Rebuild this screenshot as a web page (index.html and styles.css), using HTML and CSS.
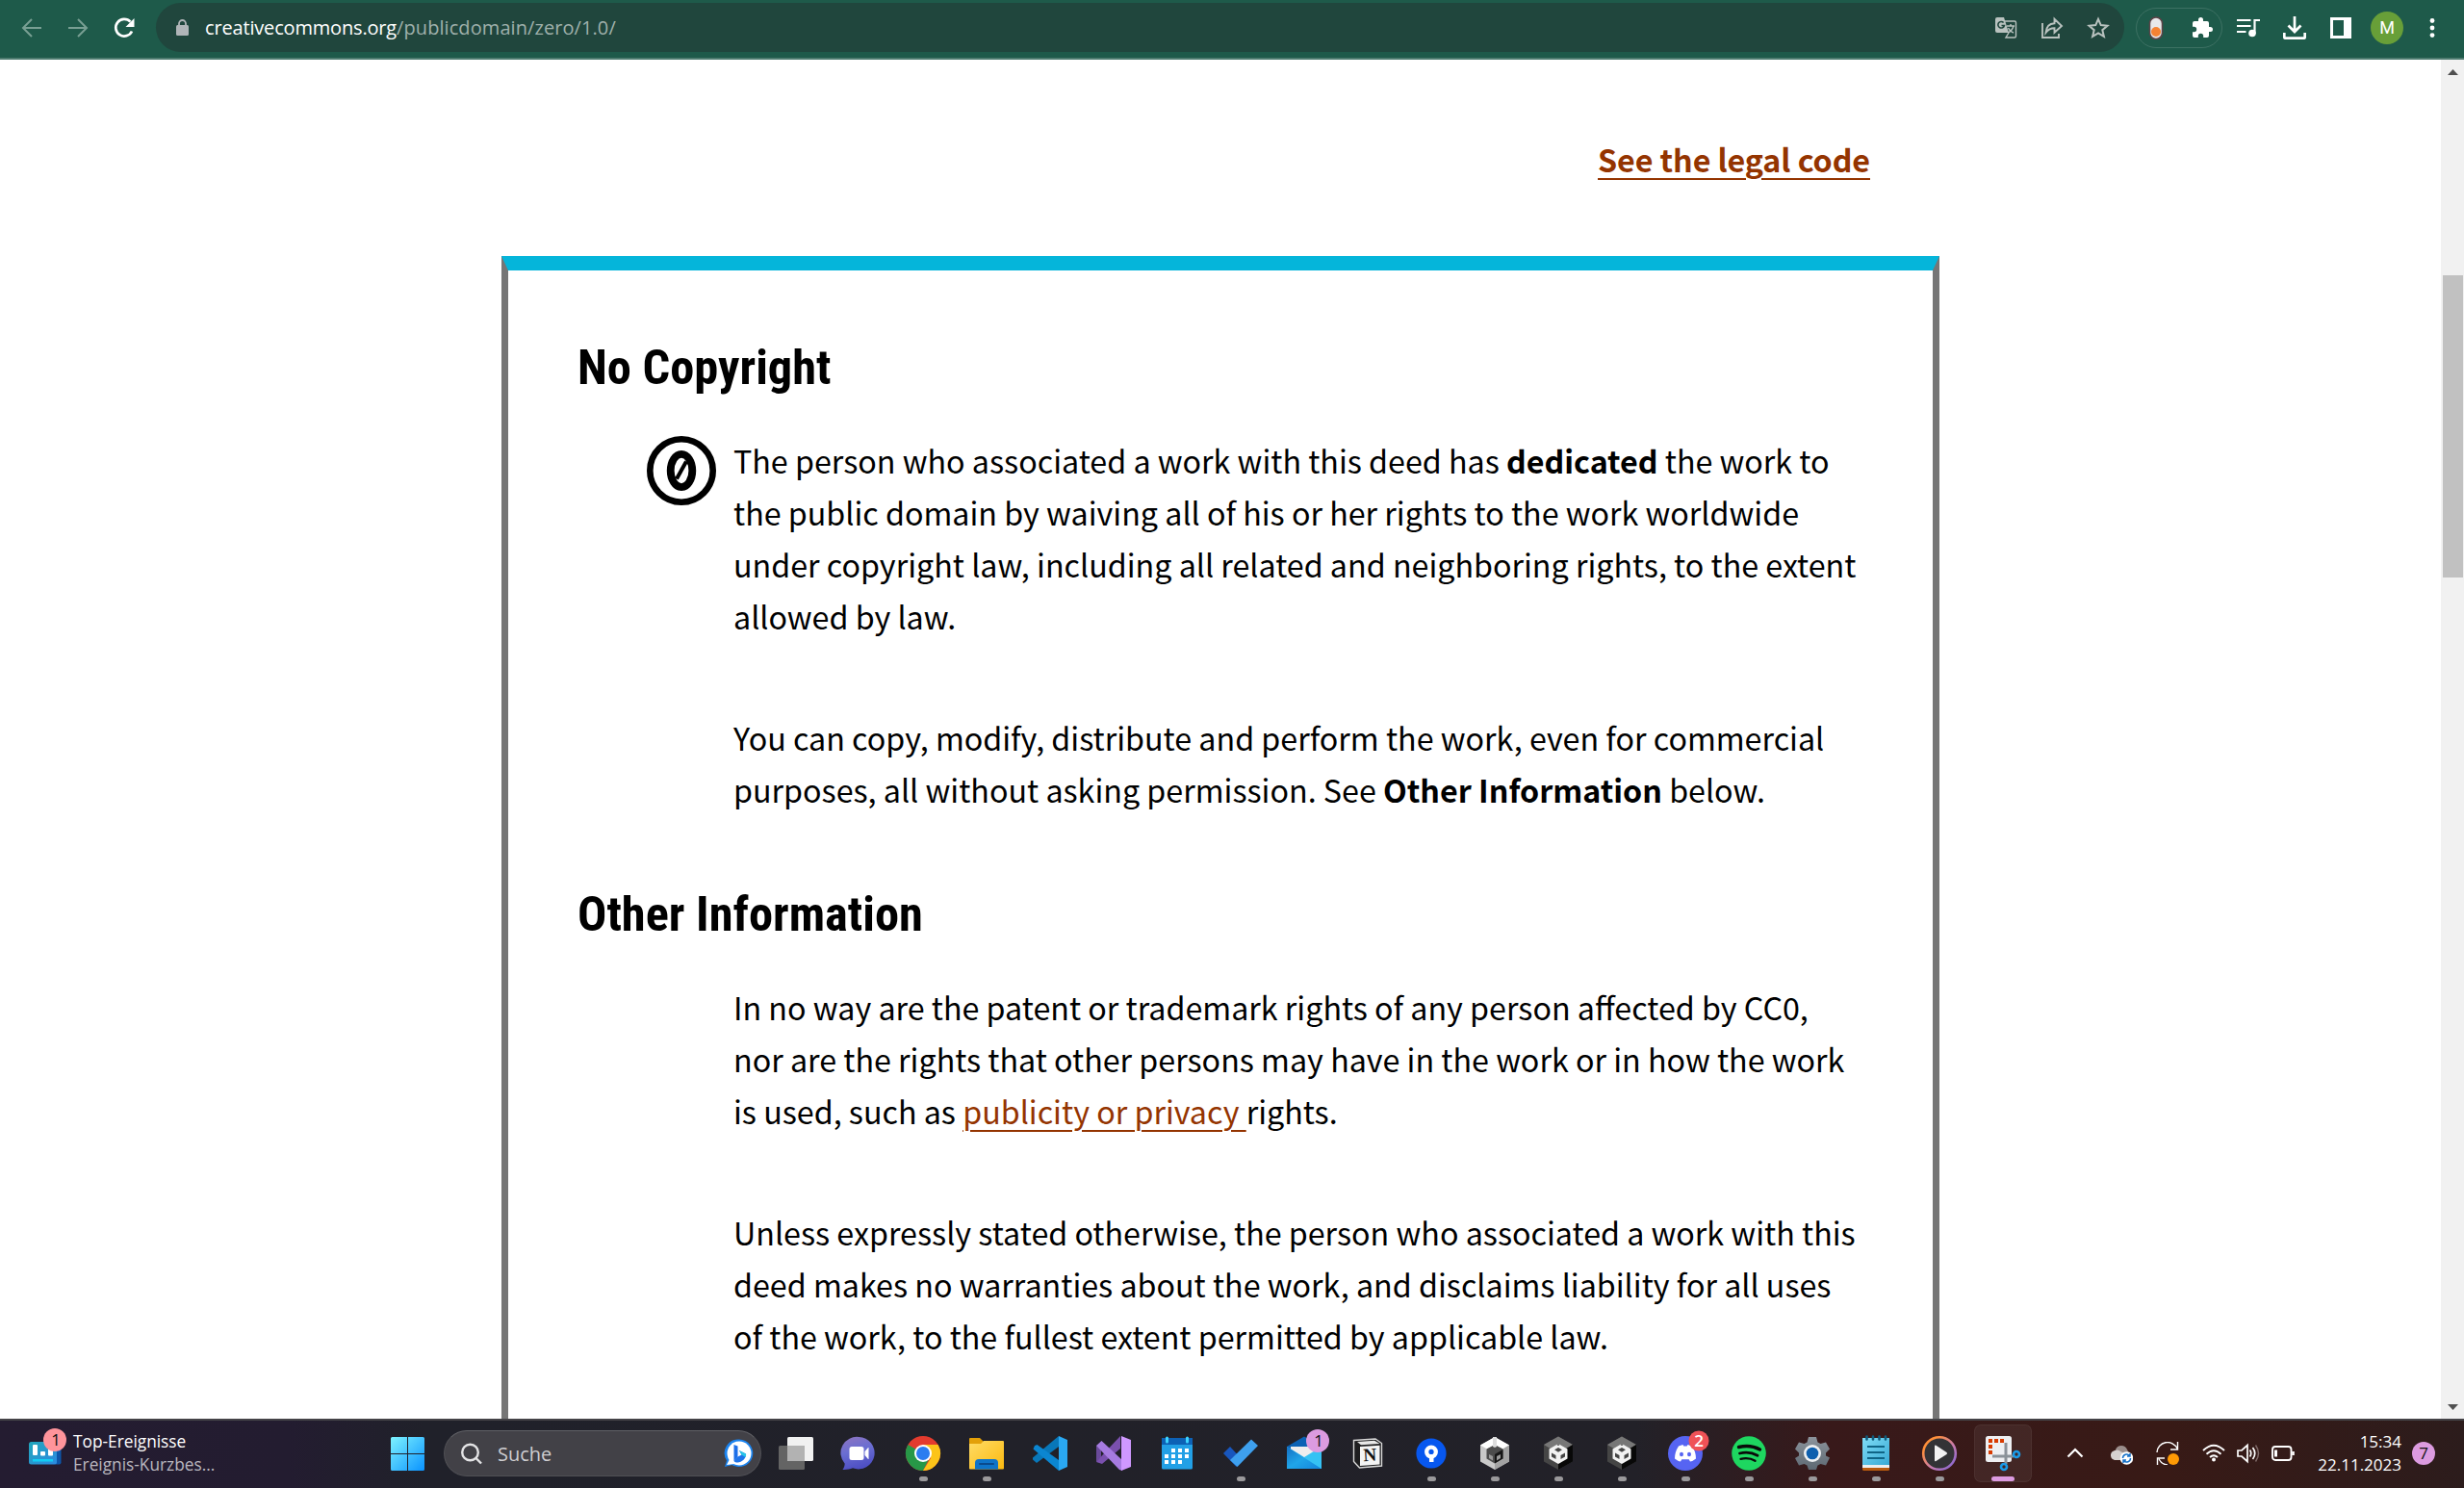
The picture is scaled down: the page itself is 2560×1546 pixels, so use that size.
FILE: index.html
```html
<!DOCTYPE html>
<html lang="en">
<head>
<meta charset="utf-8">
<title>CC0 1.0 Deed</title>
<link rel="stylesheet" href="styles.css">
</head>
<body>
<header class="toolbar">
  <nav class="nav-buttons">
    <svg class="icon dim" viewBox="0 0 24 24"><path d="M22 12H3M12 3l-9 9 9 9"/></svg>
    <svg class="icon dim" viewBox="0 0 24 24"><path d="M2 12h19M12 3l9 9-9 9"/></svg>
    <svg class="icon reload" viewBox="0 0 24 24"><path d="M20 15.500A8.800 8.800 0 1 1 18.500 5.700"/><path class="solid" d="M22.500 2v9h-9z"/></svg>
  </nav>
  <div class="omnibox">
    <svg class="lock" viewBox="0 0 13 17"><rect x="0" y="6" width="13" height="11" rx="1.500"/><path d="M3 7V4.500a3.500 3.500 0 0 1 7 0V7" fill="none" stroke="#b0b5b8" stroke-width="1.800"/></svg>
    <span class="url"><span class="host">creativecommons.org</span><span class="path">/publicdomain/zero/1.0/</span></span>
    <div class="omni-actions">
      <svg class="icon soft" viewBox="0 0 24 24"><path class="solid" d="M3 1h7l5 16H3a2 2 0 0 1-2-2V3a2 2 0 0 1 2-2z"/><path d="M11 5h10a1.500 1.500 0 0 1 1.500 1.500v14A1.500 1.500 0 0 1 21 22h-9l3-5" stroke-width="1.400"/><path d="M13 10h8M17 8v2M20 10q-1.500 5-6 7M14.500 12q2 4 5.500 5" stroke-width="1.400"/><path d="M9.600 6.500a3.300 3.300 0 1 0 .8 3H7.500" stroke="#20463d" stroke-width="1.600"/></svg>
      <svg class="icon soft" viewBox="0 0 24 24"><path d="M2 7v15h17v-4M5.500 17c.5-6 4-9.500 9-9.700V2.800L22 10l-7.500 6.800v-4.500c-4 0-6.500 1.200-9 4.700z" stroke-width="1.900"/></svg>
      <svg class="icon soft" viewBox="0 0 24 24"><path d="M12 2.800l2.700 6.300 6.800.6-5.200 4.500 1.600 6.700-5.900-3.600-5.900 3.600 1.600-6.700-5.200-4.500 6.800-.6z"/></svg>
    </div>
  </div>
  <div class="extensions">
    <svg class="icon" viewBox="0 0 24 24"><rect x="5.500" y="1" width="13" height="22.500" rx="6.500" fill="#e8e8ea" stroke="#5b4347" stroke-width="1.500"/><circle class="orange" cx="12" cy="16" r="5"/></svg>
    <svg class="icon" viewBox="0 0 24 24"><path class="solid" d="M20.500 11H19V7a2 2 0 0 0-2-2h-4V3.500a2.500 2.500 0 0 0-5 0V5H4a2 2 0 0 0-2 2v3.800h1.500a2.700 2.700 0 0 1 0 5.400H2V20a2 2 0 0 0 2 2h3.800v-1.500a2.700 2.700 0 0 1 5.400 0V22H17a2 2 0 0 0 2-2v-4h1.500a2.500 2.500 0 0 0 0-5z"/></svg>
  </div>
  <div class="browser-actions">
    <svg class="icon" viewBox="0 0 24 24"><path d="M0 4h14.500M0 10h14.500M0 16h9.500M18.500 18V4H24" stroke-width="2.200"/><circle class="solid" cx="16" cy="17.500" r="3.800"/></svg>
    <svg class="icon" viewBox="0 0 24 24"><path d="M12 0v15M5.500 9.500L12 16l6.500-6.500M1.300 17v4.500a1.200 1.200 0 0 0 1.200 1.200h19a1.200 1.200 0 0 0 1.200-1.200V17" stroke-width="2.700"/></svg>
    <svg class="icon" viewBox="0 0 24 24"><path class="solid" fill-rule="evenodd" d="M1 1h22v22H1zM4 4v16h11V4z"/></svg>
  </div>
  <div class="avatar">M</div>
  <svg class="icon" viewBox="0 0 24 24"><g class="solid"><circle cx="12" cy="4.500" r="2.400"/><circle cx="12" cy="12" r="2.400"/><circle cx="12" cy="19.600" r="2.400"/></g></svg>
</header>

<main class="viewport">
  <div class="page">
    <div class="legal"><a class="legal-link">See the legal code</a></div>
    <article class="deed">
      <h2 class="deed-title">No Copyright</h2>
      <section class="deed-section">
        <svg class="zero" viewBox="0 0 72 72"><circle cx="36" cy="36" r="32.700" stroke-width="6.600"/><ellipse cx="36" cy="36" rx="11.300" ry="17.200" stroke-width="7.800"/><path d="M31 44.500l10-18" stroke-width="4"/></svg>
        <p>The person who associated a work with this deed has <b>dedicated</b> the work to<br>the public domain by waiving all of his or her rights to the work worldwide<br>under copyright law, including all related and neighboring rights, to the extent<br>allowed by law.</p>
        <p>You can copy, modify, distribute and perform the work, even for commercial<br>purposes, all without asking permission. See <b>Other Information</b> below.</p>
      </section>
      <h2 class="deed-title">Other Information</h2>
      <section class="deed-section">
        <p>In no way are the patent or trademark rights of any person affected by CC0,<br>nor are the rights that other persons may have in the work or in how the work<br>is used, such as <a class="inline-link">publicity or privacy </a>rights.</p>
        <p>Unless expressly stated otherwise, the person who associated a work with this<br>deed makes no warranties about the work, and disclaims liability for all uses<br>of the work, to the fullest extent permitted by applicable law.</p>
      </section>
    </article>
  </div>
  <div class="scrollbar">
    <svg class="arrow" viewBox="0 0 24 24"><path d="M7 16l5.500-6 5.500 6z"/></svg>
    <div class="thumb"></div>
    <svg class="arrow" viewBox="0 0 24 24"><path d="M7 9l5.500 6L18 9z"/></svg>
  </div>
</main>

<footer class="taskbar">
  <svg width="0" height="0" class="defs">
    <defs>
      <linearGradient id="win" x1="0" y1="0" x2="1" y2="1"><stop offset="0" stop-color="#7ef3ff"/><stop offset="1" stop-color="#0a93ff"/></linearGradient>
      <linearGradient id="chat" x1="0" y1="0" x2="0.300" y2="1"><stop offset="0" stop-color="#8f74c0"/><stop offset="0.500" stop-color="#6a6ed2"/><stop offset="1" stop-color="#4f50c4"/></linearGradient>
      <linearGradient id="folder" x1="0" y1="0" x2="1" y2="1"><stop offset="0" stop-color="#ffdc66"/><stop offset="1" stop-color="#fbb90f"/></linearGradient>
      <linearGradient id="ring" x1="0" y1="0" x2="1" y2="1"><stop offset="0.200" stop-color="#ff8f3a"/><stop offset="0.600" stop-color="#c77bb0"/><stop offset="1" stop-color="#7a63d8"/></linearGradient>
      <linearGradient id="mail" x1="0" y1="0" x2="1" y2="1"><stop offset="0" stop-color="#1470c4"/><stop offset="0.500" stop-color="#20a5e8"/><stop offset="1" stop-color="#1484dc"/></linearGradient>
      <linearGradient id="pad" x1="0" y1="0" x2="1" y2="1"><stop offset="0" stop-color="#7fdcf6"/><stop offset="1" stop-color="#38a9d4"/></linearGradient>
      <linearGradient id="gear" x1="0" y1="0" x2="0" y2="1"><stop offset="0" stop-color="#8c949c"/><stop offset="1" stop-color="#5d6872"/></linearGradient>
      <linearGradient id="news" x1="0" y1="0" x2="1" y2="1"><stop offset="0" stop-color="#22a6bb"/><stop offset="1" stop-color="#2b8ae0"/></linearGradient>
    </defs>
  </svg>
  <div class="widgets">
    <svg class="news" viewBox="0 0 40 40"><rect x="26" y="15" width="7.500" height="23.500" rx="2" fill="#0d55a8"/><rect x="0" y="15" width="29" height="23.500" rx="2.500" fill="url(#news)"/><g fill="#fff"><rect x="4" y="18" width="5" height="11" rx="1"/><rect x="12" y="25" width="5" height="4.500" rx="1"/><rect x="20" y="20" width="5" height="9.500" rx="1"/></g><rect x="4" y="33" width="21" height="2.500" fill="#12cdf4"/><circle cx="27" cy="13" r="12" fill="#ff949b"/><text x="28" y="19" class="badge-text dark">1</text></svg>
    <div class="headline"><span class="head-top">Top-Ereignisse</span><span class="head-sub">Ereignis-Kurzbes...</span></div>
  </div>
  <svg class="start" viewBox="0 0 35 35"><path fill="url(#win)" d="M1.500 0H17v17H0V1.500A1.500 1.500 0 0 1 1.500 0zM18 0h15.500A1.500 1.500 0 0 1 35 1.500V17H18zM0 18h17v17H1.500A1.500 1.500 0 0 1 0 33.500zM18 18h17v15.500a1.500 1.500 0 0 1-1.500 1.500H18z"/></svg>
  <div class="search">
    <svg class="lens" viewBox="0 0 22 23"><circle cx="9.500" cy="10" r="8.300"/><path d="M15.500 16l5.500 5.500"/></svg>
    <span class="search-text">Suche</span>
    <svg class="bing" viewBox="0 0 32 32"><path d="M17 1.500a14.300 14.300 0 1 1-7.500 26.500L2 30l2-6.500A14.300 14.300 0 0 1 17 1.500z" fill="#1b83ee"/><circle cx="17" cy="16" r="12.500" fill="#fff"/><path d="M4 28l3-6 5 5z" fill="#fff"/><path d="M11.500 7l4 1.500V20l-4 4z" fill="#1d6fe8"/><path d="M11.500 24l4-4.500 4-2-2.500-4.500 7 3.500c.8 4.500-4.500 9-8.500 9-1.800 0-3.200-.5-4-1.500z" fill="#1f74ea"/><path d="M17 13l7 3.500c.3 1.500 0 2.500-.5 3.500l-4-2.500z" fill="#29c5e6"/></svg>
  </div>
  <div class="apps">
    <svg class="app" viewBox="0 0 66 72"><rect x="15" y="28" width="27" height="25" rx="1.500" fill="#646464"/><rect x="24" y="19" width="27" height="25" rx="1.500" fill="#f1f1f1"/><path d="M24 28h18v16H25.500a1.500 1.500 0 0 1-1.500-1.500z" fill="#b2b2b2"/></svg>
    <svg class="app" viewBox="0 0 66 72"><path d="M32.500 19a16.700 16.700 0 1 1-6.500 32.300c-3 1.200-6.500 1.900-10.500 1.700 1.500-2.500 2-4 2.200-6.300A16.700 16.700 0 0 1 32.500 19z" fill="url(#chat)"/><rect x="22.500" y="29" width="15" height="14" rx="2.500" fill="#fff"/><path d="M38.500 34l3.500-4h.5v12H42l-3.500-4z" fill="#fff"/></svg>
    <svg class="app" viewBox="0 0 66 72"><circle cx="33" cy="36" r="18" fill="#e33b2e"/><path d="M33 36L17.400 27A18 18 0 0 0 33 54l7-14z" fill="#279847"/><path d="M33 27h15.600A18 18 0 0 1 33 54l8-13z" fill="#fcc419"/><circle cx="33" cy="36" r="9" fill="#fff"/><circle cx="33" cy="36" r="7" fill="#2b7cf0"/><rect class="dot" x="29" y="60" width="9" height="5" rx="2.500"/></svg>
    <svg class="app" viewBox="0 0 66 72"><path d="M15 21q0-1 1-1h10l4 4h1v6H15z" fill="#e3a008"/><path d="M15 26h12l3-3h20q1 0 1 1v27.500q0 1-1 1H16q-1 0-1-1z" fill="url(#folder)"/><path d="M21 52.500V46q0-4 4-4h16q4 0 4 4v6.500z" fill="#0e74c8"/><path d="M26 47h14" stroke="#0a4a8c" stroke-width="2" stroke-linecap="round"/><rect class="dot" x="29" y="60" width="9" height="5" rx="2.500"/></svg>
    <svg class="app" viewBox="0 0 66 72"><path d="M42 18v11L19 46l-4-3.500v-2z" fill="#0877b9"/><path d="M15.500 31.500l1.500-3.500 2.500-1L42 43v11z" fill="#0b86d1"/><path d="M42 18l9 4v28l-9 4V18z" fill="#2aa8f2"/></svg>
    <svg class="app" viewBox="0 0 66 72"><path d="M15 28l5 4v9l-5 4z" fill="#6a4a9a"/><path d="M40 18v13L21 47l-6-2 8-9z" fill="#7a50ae"/><path d="M15 28l5.500-5L42 43v11L39 53z" fill="#a67be0"/><path d="M41 18l10 4v28l-10 4z" fill="#cf98ff"/></svg>
    <svg class="app" viewBox="0 0 66 72"><path d="M17 27h32v24q0 1.500-1.500 1.500h-29Q17 52.500 17 51z" fill="#22a0e6"/><path d="M17 20h32v7H17z" fill="#0d61b5"/><path d="M22.500 20v4M43.500 20v4" stroke="#3dd5ff" stroke-width="3" stroke-linecap="round"/><g fill="#fff"><path d="M27 31h4v4h-4zM34 31h4v4h-4zM41 31h4v4h-4zM20 37h4v4h-4zM27 37h4v4h-4zM34 37h4v4h-4zM41 37h4v4h-4zM20 43h4v4h-4zM27 43h4v4h-4zM34 43h4v4h-4z"/></g></svg>
    <svg class="app" viewBox="0 0 66 72"><path d="M15 36l7-7 11 12-4.500 9z" fill="#1856bd"/><path d="M22 43L44 21.500l7 6.500-21.500 22z" fill="#3ea0ee"/><rect class="dot" x="29" y="60" width="9" height="5" rx="2.500"/></svg>
    <svg class="app" viewBox="0 0 66 72"><path d="M15 29l18-10.500L51 29v8H15z" fill="#0b62b4"/><path d="M19 29h29v15H19z" fill="#eee"/><path d="M15 29l18 11 18-11v23H15z" fill="#35c2f4"/><path d="M15 29l36 23H15z" fill="url(#mail)"/><circle cx="47" cy="23" r="12" fill="#dc9be0"/><text x="48" y="29" class="badge-text dark">1</text></svg>
    <svg class="app" viewBox="0 0 66 72"><path d="M18.500 22.500L41 21l6.500 4.500V49L24.500 51l-6-6.500z" fill="#1e1e20" stroke="#d8d8d8" stroke-width="1.400"/><path d="M22 24l18-1.200 5.500 3.300L26 27.300z" fill="#e8e8e8"/><path d="M25 29l20.500-1.300V47.500L25 49z" fill="#f4f4f4"/><text x="35.300" y="44" transform="rotate(-3 35 38)" class="notion-n">N</text></svg>
    <svg class="app" viewBox="0 0 66 72"><circle cx="33" cy="36" r="15.600" fill="#0757ef"/><circle cx="33" cy="34.500" r="4.800" fill="none" stroke="#fff" stroke-width="4.300"/><path d="M31 37h4.500v8H31z" fill="#fff"/><rect class="dot" x="29" y="60" width="9" height="5" rx="2.500"/></svg>
    <svg class="app" viewBox="0 0 66 72"><path d="M33 19l15 8.500v17L33 53l-15-8.500v-17z" fill="#c9c9c9"/><path d="M33 19l15 8.500-7 4-8-4.500-8 4.500-7-4z" fill="#fff"/><path d="M48 27.500v17L33 53v-6l8.500-5V31.500z" fill="#a3a3a3"/><path d="M33 27l8.500 4.500v10L33 46.500l-8.500-5v-10z" fill="#4c4c4c"/><path d="M33 37l8.500-5v9.500L33 46.500z" fill="#151515"/><path d="M31 19h4v10l-2 1-2-1z" fill="#ddd"/><path d="M27 37l4 2v4.500L27 41zM39 37l-4 2v4.500l4-2.500z" fill="#999"/><rect class="dot" x="29" y="60" width="9" height="5" rx="2.500"/></svg>
    <svg class="app" viewBox="0 0 66 72"><path d="M33 18.500l15 8.500v17.500L33 53l-15-8.500V27z" fill="#454545"/><path d="M33 18.500L48 27l-15 9-15-9z" fill="#777"/><path d="M48 27v17.500L33 53V36z" fill="#080808"/><path d="M33 26l9.500 5.500v10L33 47l-9.500-5.500v-10z" fill="#f2f2f2"/><path d="M33 30l4 2.300-4 2.400-4-2.400zM26 35.500l4.500 2.500v4L26 39.500zM40 35.500L35.500 38v4l4.500-2.500z" fill="#444"/><path d="M31.800 23h2.400v5h-2.400z" fill="#777"/><rect class="dot" x="29" y="60" width="9" height="5" rx="2.500"/></svg>
    <svg class="app" viewBox="0 0 66 72"><path d="M33 18.500l15 8.500v17.500L33 53l-15-8.500V27z" fill="#454545"/><path d="M33 18.500L48 27l-15 9-15-9z" fill="#777"/><path d="M48 27v17.500L33 53V36z" fill="#080808"/><path d="M33 26l9.500 5.500v10L33 47l-9.500-5.500v-10z" fill="#f2f2f2"/><path d="M33 30l4 2.300-4 2.400-4-2.400zM26 35.500l4.500 2.500v4L26 39.500zM40 35.500L35.500 38v4l4.500-2.500z" fill="#444"/><path d="M31.800 23h2.400v5h-2.400z" fill="#777"/><rect class="dot" x="29" y="60" width="9" height="5" rx="2.500"/></svg>
    <svg class="app" viewBox="0 0 66 72"><circle cx="33" cy="36" r="18" fill="#5664f2"/><path d="M26 28.500q2-1 4.500-1.500l.8 1.500h3.400l.8-1.500q2.500.5 4.500 1.500 4 6 4 13-3 2.500-6 3l-1.300-2.200h-7.400L28 44.500q-3-.5-6-3 0-7 4-13z" fill="#fff"/><ellipse cx="29" cy="37" rx="2" ry="2.300" fill="#5664f2"/><ellipse cx="37" cy="37" rx="2" ry="2.300" fill="#5664f2"/><circle cx="47" cy="23" r="10.500" fill="#ef5257"/><text x="47" y="29" class="badge-text light">2</text><rect class="dot" x="29" y="60" width="9" height="5" rx="2.500"/></svg>
    <svg class="app" viewBox="0 0 66 72"><circle cx="33" cy="36" r="17.800" fill="#1ed760"/><g fill="none" stroke="#0a0a0a" stroke-linecap="round"><path d="M22.500 29.500q12-3 22 2.500" stroke-width="3.400"/><path d="M23.500 36q10-2.500 18.500 2.300" stroke-width="2.800"/><path d="M24.500 41.800q8.500-2 15 2" stroke-width="2.300"/></g><rect class="dot" x="29" y="60" width="9" height="5" rx="2.500"/></svg>
    <svg class="app" viewBox="0 0 66 72"><path d="M29 19h8l1.500 5.500 3 1.500 5.500-1.500 4 7-4 4v3l4 2-4 8-5.500-1.500-3 1.500L37 53h-8l-1.500-4.500-3-1.500-5.500 1.500-4-7.500 4-2.500v-3l-4-4 4-7 5.500 1.500 3-1.500z" fill="url(#gear)"/><circle cx="33" cy="36" r="9" fill="#eef0f2"/><circle cx="33" cy="36" r="6.300" fill="#0d5fae"/><rect class="dot" x="29" y="60" width="9" height="5" rx="2.500"/></svg>
    <svg class="app" viewBox="0 0 66 72"><rect x="19" y="46" width="28" height="8" rx="1.500" fill="#b85a0e"/><rect x="19" y="44" width="28" height="7" fill="#eee"/><path d="M19 20h28v28H19z" fill="url(#pad)"/><path d="M23.500 18.500v3M30 18.500v3M36.500 18.500v3M43 18.500v3" stroke="#0f5c7c" stroke-width="2.600" stroke-linecap="round"/><path d="M24 29h18M24 35h18M24 41h18" stroke="#0f6486" stroke-width="1.800"/><rect class="dot" x="29" y="60" width="9" height="5" rx="2.500"/></svg>
    <svg class="app" viewBox="0 0 66 72"><circle cx="33" cy="36" r="16.800" fill="#333336" stroke="url(#ring)" stroke-width="2.600"/><path d="M28 28.500q0-1.500 1.500-.7L40.500 35q1.200 1 0 2l-11 7q-1.500.8-1.500-.8z" fill="#f2f2f2"/><rect class="dot" x="29" y="60" width="9" height="5" rx="2.500"/></svg>
    <svg class="app" viewBox="0 0 66 72"><rect x="3.500" y="6.500" width="59" height="59" rx="6" fill="#fff" fill-opacity="0.060" stroke="#fff" stroke-opacity="0.080"/><rect x="15" y="18" width="27" height="27" rx="2.500" fill="#eef0f3"/><path d="M18 21h4v4h-4zM24 21h4v4h-4zM30 21h4v4h-4zM18 27h4v4h-4zM18 33h4v4h-4z" fill="#d83b01"/><path d="M22 39h22M36 25v22" stroke="#8b9299" stroke-width="3"/><circle cx="47" cy="37" r="3" fill="none" stroke="#1a9be8" stroke-width="2.600"/><circle cx="34" cy="50" r="3" fill="none" stroke="#1a9be8" stroke-width="2.600"/><rect x="21" y="60" width="24" height="5" rx="2.500" fill="#dc9be0"/></svg>
  </div>
  <div class="tray">
    <svg class="tray-icon chevron" viewBox="0 0 24 24"><path d="M4.500 15.500L12 8l7.500 7.500" stroke-width="2.200"/></svg>
    <svg class="tray-icon cloud" viewBox="0 0 24 24"><path d="M6 8a6.500 6.500 0 0 1 12 0l2 4H9z" fill="#9a8d8b" stroke="none"/><path d="M5 19a5 5 0 0 1-1-9.500q4-2.500 8 1l6 2.500v6z" fill="#d5d1d0" stroke="none"/><circle cx="17.500" cy="17" r="6.800" fill="#fff" stroke="none"/><path d="M13.500 17a4 4 0 0 1 7-2.700M21.500 17a4 4 0 0 1-7 2.700M21 12v3h-3M14 22v-3h3" stroke="#1570c8" stroke-width="1.500"/></svg>
    <svg class="tray-icon sync" viewBox="0 0 24 24"><path d="M1 11A11 11 0 0 1 22 7M22.500 0v8H15M12 24a11 11 0 0 1-9-6M1.500 24v-7H9" stroke-width="1.400"/><circle cx="18" cy="18" r="6" fill="#ff9a05" stroke="none"/></svg>
    <svg class="tray-icon wifi" viewBox="0 0 24 24"><path d="M1 9q11-10.500 22 0M4.500 12.700q7.500-7 15 0M8 16q4-3.700 8 0" stroke-width="1.900"/><circle cx="12" cy="18.500" r="2" fill="#fff" stroke="none"/></svg>
    <svg class="tray-icon volume" viewBox="0 0 24 24"><path d="M1 9h4l6-5.500v17L5 15H1zM13.500 8.500q2.500 3.500 0 7M16.500 6q4.500 6 0 12" stroke-width="1.700"/><path d="M19.500 3.500q6 8.500 0 17" stroke="#7d6866" stroke-width="1.500"/></svg>
    <svg class="tray-icon" viewBox="0 0 24 24"><rect x="1" y="5" width="19.500" height="14" rx="3" stroke-width="1.900"/><path d="M4.500 8.500v7" stroke-width="3"/><path d="M22.500 10v4" stroke-width="2.600"/></svg>
  </div>
  <div class="clock"><span class="time">15:34</span><span class="date">22.11.2023</span></div>
  <div class="notice">7</div>
</footer>
</body>
</html>
```
FILE: styles.css
```css
* { box-sizing: border-box; }
body {
  margin: 0;
  width: 2560px;
  height: 1546px;
  overflow: hidden;
  display: flex;
  flex-direction: column;
  background: #fff;
  font-family: "Open Sans", "Noto Sans", sans-serif;
}

/* Browser toolbar */
.toolbar {
  height: 62px;
  flex: none;
  display: flex;
  align-items: flex-start;
  padding: 3px 20px 0 21px;
  background: #1e5a4a;
  border-bottom: 2px solid #4f7d71;
}
.toolbar > svg, .nav-buttons, .browser-actions { margin-top: 14px; }
.icon { width: 24px; height: 24px; display: block; fill: none; stroke: #fff; stroke-width: 2; }
.icon .solid { fill: #fff; stroke: none; }
.dim { stroke: #789f93; }
.reload { stroke-width: 2.700; }
.soft { stroke: #b9c2bf; }
.soft .solid { fill: #b9c2bf; }
.icon .orange { fill: #f58233; stroke: none; }
.nav-buttons { display: flex; gap: 24px; width: 141px; }
.omnibox {
  width: 2045px;
  height: 51px;
  display: flex;
  align-items: center;
  padding: 0 15px 0 21px;
  border-radius: 26px;
  background: #20463d;
}
.lock { width: 13px; height: 17px; fill: #b0b5b8; }
.url { margin-left: 17px; font-size: 20px; line-height: 28px; white-space: nowrap; }
.host { color: #fff; letter-spacing: -0.170px; }
.path { color: #9fb0ab; letter-spacing: 0.080px; }
.omni-actions { margin-left: auto; display: flex; gap: 24px; }
.extensions {
  width: 90px;
  height: 42px;
  margin: 5px 15px 0 12px;
  padding: 0 8px;
  display: flex;
  align-items: center;
  justify-content: space-between;
  border: 1px solid #3d7163;
  border-radius: 21px;
}
.browser-actions { display: flex; gap: 24px; }
.avatar {
  width: 34px;
  height: 34px;
  margin: 9px 18px 0 19px;
  border-radius: 50%;
  background: #689f38;
  color: #fff;
  font: 18px/34px Roboto, sans-serif;
  text-align: center;
}

/* Web page */
.viewport { flex: 1; min-height: 0; display: flex; overflow: hidden; }
.page {
  flex: 1;
  padding: 76px 521px 0;
  font-family: "Noto Sans CJK SC", sans-serif;
  font-size: 32.240px;
  line-height: 54px;
  color: #000;
}
.legal { height: 128px; width: 1422px; text-align: right; font-weight: 700; letter-spacing: -0.080px; }
.legal-link, .inline-link {
  color: #943400;
  text-decoration: underline;
  text-decoration-thickness: 2px;
  text-underline-offset: 6px;
}
.deed {
  width: 1494px;
  height: 1300px;
  border: 7px solid #767676;
  border-top: 15px solid #05b5da;
  padding: 70px 72px 0;
}
.deed-title {
  margin: 0;
  height: 100px;
  font: 700 50.400px/62px "Roboto Condensed", Roboto, sans-serif;
  font-stretch: 75%;
}
.deed-section { display: grid; padding-left: 162px; white-space: nowrap; }
.deed-section p { margin: 0 0 72px; grid-column: 1; }
.zero { grid-column: 1; grid-row: 1; width: 72px; height: 72px; margin: 2px 0 0 -90px; fill: none; stroke: #000; }
.deed-section p:first-of-type { grid-row: 1; }

.scrollbar { width: 24px; display: flex; flex-direction: column; background: #f1f1f1; }
.arrow { width: 24px; height: 24px; fill: #505050; }
.thumb { width: 21px; height: 314px; margin: 200px 0 auto 2px; background: #c1c1c1; }

/* Windows taskbar */
.taskbar {
  height: 72px;
  flex: none;
  display: flex;
  border-top: 2px solid #444347;
  background: linear-gradient(90deg, #241c31 0, #231c30 300px, #20212a 440px, #222128 1700px, #38191a 1900px, #381a16 2250px, #2c1c1c 2560px);
  color: #fff;
}
.defs { position: absolute; }
.widgets { width: 406px; display: flex; padding: 6px 0 0 30px; }
.news { width: 40px; height: 40px; margin-top: 1px; }
.headline { margin-left: 6px; display: flex; flex-direction: column; font-size: 17.300px; line-height: 24px; padding-top: 4px; white-space: nowrap; }
.head-sub { color: #bab7bf; }
.start { width: 35px; height: 35px; margin-top: 17px; }
.search {
  width: 330px;
  height: 48px;
  margin: 10px 3px 0 20px;
  padding: 0 8px 0 17px;
  display: flex;
  align-items: center;
  border: 1px solid #505055;
  border-top-color: #616166;
  border-radius: 24px;
  background: #424147;
}
.lens { width: 22px; height: 23px; fill: none; stroke: #e3e3e5; stroke-width: 2.400; }
.search-text { margin-left: 16px; font-size: 20px; color: #cfced1; }
.bing { width: 32px; height: 32px; margin: 0 -1px 0 auto; }
.apps { display: flex; margin-top: -2px; }
.app { width: 66px; height: 72px; display: block; }
.dot { fill: #9a999b; }
.badge-text { font: 17px "Open Sans", sans-serif; text-anchor: middle; }
.dark { fill: #111; }
.light { fill: #fff; font-weight: 600; }
.notion-n { font: 700 19px "Liberation Serif", serif; text-anchor: middle; fill: #111; }
.tray { display: flex; margin: 22px 0 0 30px; }
.tray-icon { width: 24px; height: 24px; fill: none; stroke: #fff; }
.cloud { margin-left: 24px; }
.sync { margin-left: 24px; }
.wifi { margin-left: 24px; }
.volume { margin: 0 12px; }
.clock { width: 111px; display: flex; flex-direction: column; align-items: flex-end; padding-top: 10px; font-size: 17px; line-height: 24px; }
.notice {
  width: 24px;
  height: 24px;
  margin: 22px 0 0 11px;
  border-radius: 50%;
  background: #dc9be0;
  color: #111;
  font-size: 17px;
  line-height: 24px;
  text-align: center;
}
```
